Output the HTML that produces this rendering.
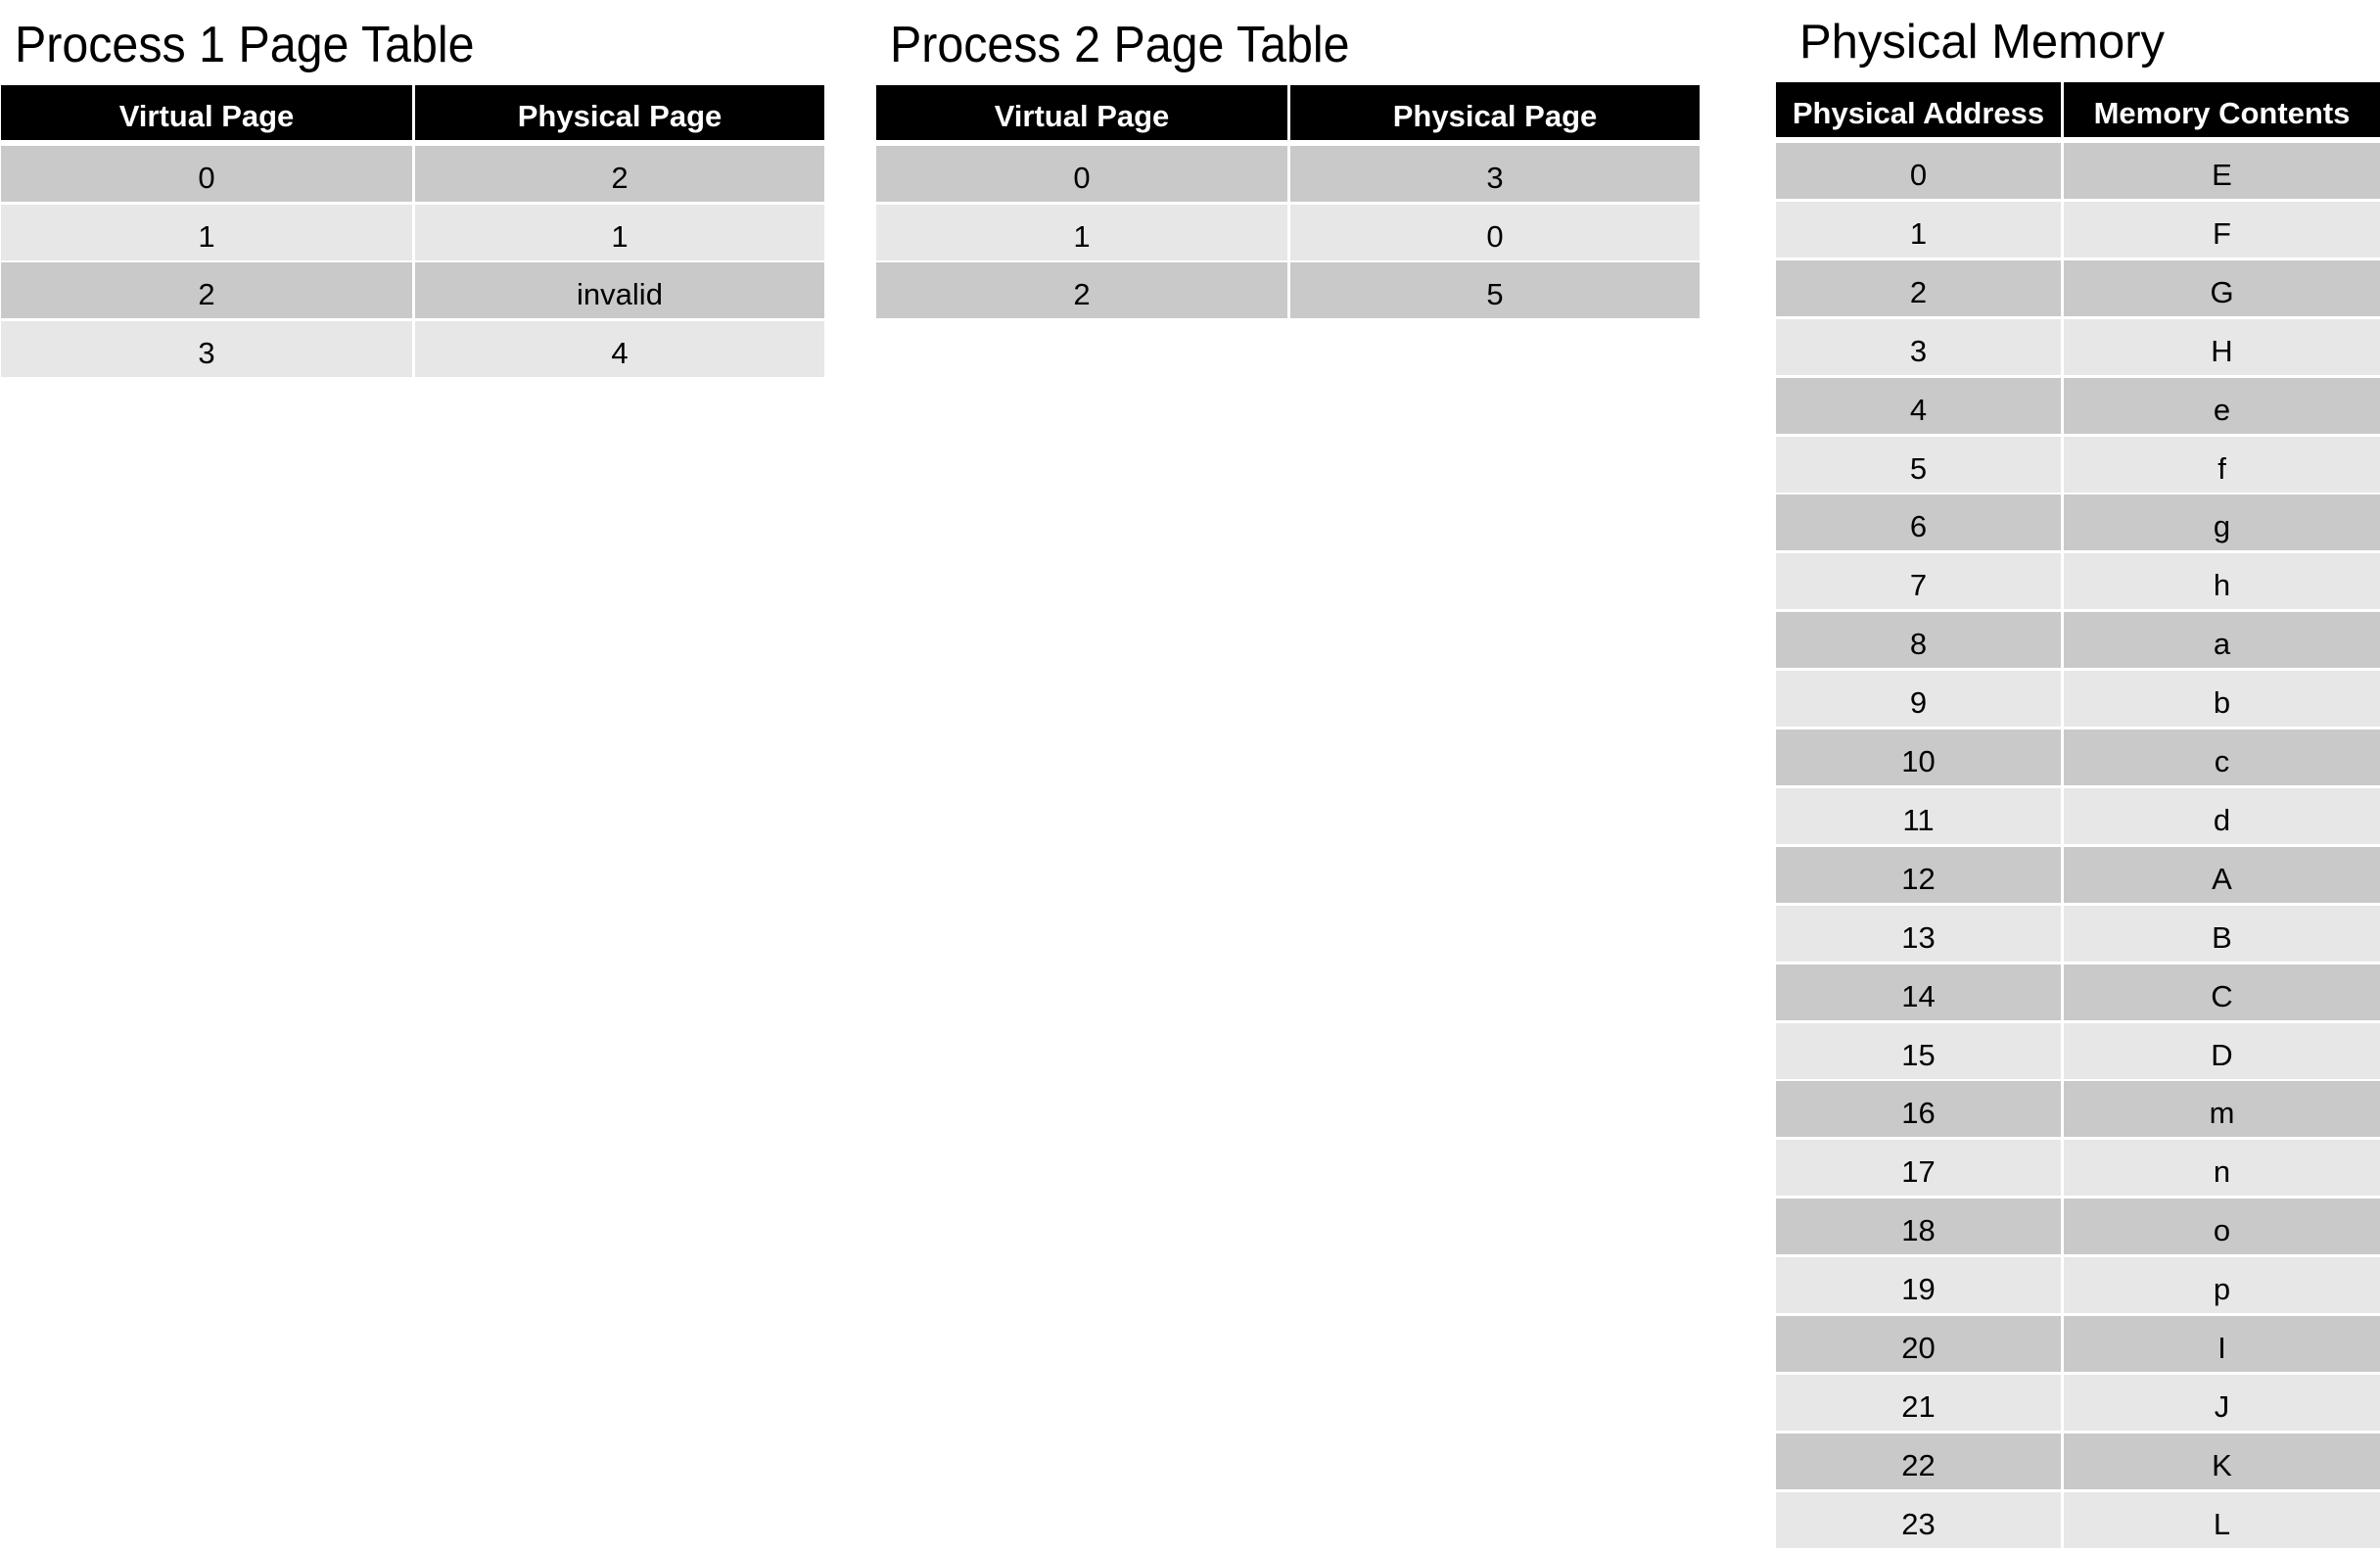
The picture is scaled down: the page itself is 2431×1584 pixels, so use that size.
<!DOCTYPE html>
<html><head><meta charset="utf-8"><style>
html,body{margin:0;padding:0;background:#fff;}
body{width:2431px;height:1584px;position:relative;overflow:hidden;font-family:"Liberation Sans",Arial,sans-serif;}
.t{position:absolute;font-size:49px;line-height:1;color:#000;white-space:nowrap;transform-origin:left top;}
.c{position:absolute;display:flex;align-items:center;justify-content:center;font-size:31px;color:#000;padding-top:9px;box-sizing:border-box;}
.h{background:#000;color:#fff;font-weight:bold;padding-top:8px;font-size:31px;}
.d{background:#c9c9c9;}
.l{background:#e7e7e7;}
</style></head><body>
<div class="t" style="left:15px;top:20px;font-size:52px;transform:scaleX(0.93);">Process 1 Page Table</div>
<div class="t" style="left:909px;top:20px;font-size:52px;transform:scaleX(0.93);">Process 2 Page Table</div>
<div class="t" style="left:1838px;top:19px;font-size:49px;">Physical Memory</div>
<div id="root"></div>
<script>
var out='';
function cell(x,y,w,h,cls,txt){out+='<div class="c '+cls+'" style="left:'+x+'px;top:'+y+'px;width:'+w+'px;height:'+h+'px">'+txt+'</div>';}
function table(x1,xd,x2,hy,hh,ry,pitch,rh,head,rows){
 var w1=xd-x1, x2s=xd+3, w2=x2-x2s;
 cell(x1,hy,w1,hh,'h',head[0]);cell(x2s,hy,w2,hh,'h',head[1]);
 for(var i=0;i<rows.length;i++){var y=Math.round(ry+i*pitch);var cls=i%2?'l':'d';
  cell(x1,y,w1,rh,cls,rows[i][0]);cell(x2s,y,w2,rh,cls,rows[i][1]);}
}
table(1,421,842,87,56,149,59.6,57,['Virtual Page','Physical Page'],[['0','2'],['1','1'],['2','invalid'],['3','4']]);
table(895,1315,1736,87,56,149,59.6,57,['Virtual Page','Physical Page'],[['0','3'],['1','0'],['2','5']]);
var mem='EFGHefghabcdABCDmnopIJKL'.split('');var r=[];for(var i=0;i<24;i++)r.push([String(i),mem[i]]);
table(1814,2105,2431,84,56,146,59.9,57,['Physical Address','Memory Contents'],r);
document.getElementById('root').innerHTML=out;
</script>
</body></html>
